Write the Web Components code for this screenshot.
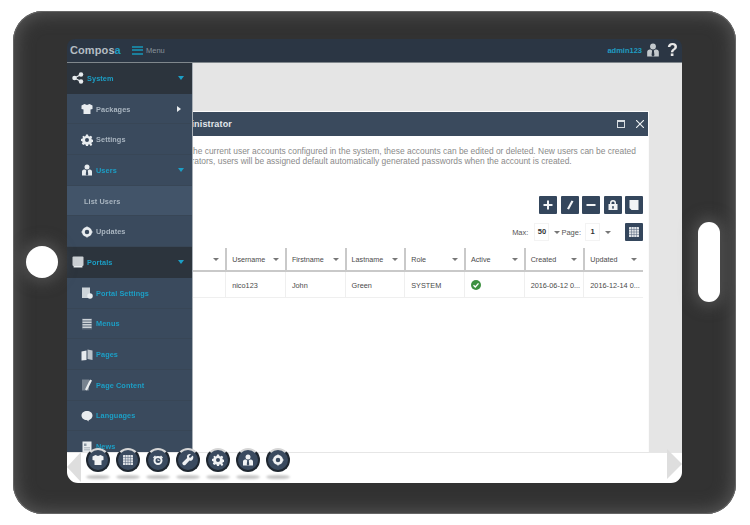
<!DOCTYPE html>
<html>
<head>
<meta charset="utf-8">
<title>Composa</title>
<style>
html, body { margin: 0; padding: 0; background: #fff; }
body { width: 750px; height: 525px; overflow: hidden; font-family: "Liberation Sans", Arial, sans-serif; }
</style>
</head>
<body>
<tablet-frame>
  <top-bar></top-bar>
  <side-menu slot="side">
    <menu-row level="top" icon="network" arrow="down" active>System</menu-row>
    <menu-row icon="shirt" arrow="right">Packages</menu-row>
    <menu-row icon="gear">Settings</menu-row>
    <menu-row icon="user" arrow="down" active>Users</menu-row>
    <menu-row level="leaf">List Users</menu-row>
    <menu-row icon="ring">Updates</menu-row>
    <menu-row level="top" icon="monitor" arrow="down" active>Portals</menu-row>
    <menu-row icon="docgear" active>Portal Settings</menu-row>
    <menu-row icon="list" active>Menus</menu-row>
    <menu-row icon="pages" active>Pages</menu-row>
    <menu-row icon="pencil" active>Page Content</menu-row>
    <menu-row icon="bubble" active>Languages</menu-row>
    <menu-row icon="news" active>News</menu-row>
  </side-menu>
  <user-window slot="main"></user-window>
  <app-dock slot="dock"></app-dock>
</tablet-frame>

<script>
const ICONS = {
  network: '<circle cx="18" cy="5" r="4.5"/><circle cx="5" cy="12" r="4.5"/><circle cx="18" cy="19" r="4.5"/><path d="M5 12L18 5M5 12l13 7" stroke="currentColor" stroke-width="2.4"/>',
  shirt: '<path d="M7 2l5 2 5-2 6 3v7l-4 1v9H5v-9l-4-1V5z"/>',
  gear: '<path d="M10 1h4l.8 3.2 2 .8L19.700 3.300l2.800 2.900-1.700 2.800.8 2 3.200.8v4l-3.200.8-.8 2 1.700 2.800-2.800 2.900L16.800 20.400l-2 .8L14 24h-4l-.8-2.800-2-.8-2.900 1.700-2.800-2.900 1.700-2.800-.8-2L0 14v-4l3.200-.8.800-2L2.300 6.200l2.800-2.900L7.200 5l2-.8zM12 8a4 4 0 1 0 0 8 4 4 0 0 0 0-8z" fill-rule="evenodd"/>',
  user: '<circle cx="12" cy="6" r="5"/><path d="M2 23v-8c0-3 3-4 6-4l2.500 2-1 8 2.500 2 2.500-2-1-8 2.500-2c3 0 6 1 6 4v8z"/>',
  ring: '<path d="M12 2a10 10 0 1 0 0 20 10 10 0 0 0 0-20zm0 5.500a4.500 4.500 0 1 1 0 9 4.500 4.500 0 0 1 0-9z" fill-rule="evenodd"/><path d="M12 0l2 3h-4zM12 24l-2-3h4zM0 12l3-2v4zM24 12l-3 2v-4z"/>',
  monitor: '<rect x="1" y="1" width="22" height="19" rx="2" fill-opacity=".85"/><rect x="3" y="20" width="18" height="3" rx="1"/>',
  docgear: '<rect x="2" y="1" width="16" height="21" fill-opacity=".85"/><circle cx="18" cy="18" r="5.500"/>',
  list: '<rect x="2" y="1" width="20" height="22" fill-opacity=".2"/><path d="M3 2h18v3H3zM3 7h18v3H3zM3 12h18v3H3zM3 17h18v3H3z" fill-opacity=".8"/>',
  pages: '<path d="M1 5l10-2v19l-10 1z"/><path d="M13 1l10 2v19l-10-2z" fill-opacity=".75"/>',
  pencil: '<rect x="2" y="1" width="14" height="22" fill-opacity=".35"/><path d="M18 1l4 2-10 20-4-2z"/>',
  bubble: '<path d="M12 2c6 0 11 3.500 11 9s-5 9-8 9l1 3-5-3C6 20 1 16.500 1 11S6 2 12 2z"/>',
  news: '<rect x="3" y="1" width="18" height="23"/><path d="M6 5h5v5H6zM6 13h12v1.500H6zM6 17h12v1.500H6z" fill="#8b97a3"/>',
  grid: '<rect x="2" y="2" width="20" height="20" rx="1" fill-opacity=".9"/><path d="M2 7h20M2 12h20M2 17h20M7 2v20M12 2v20M17 2v20" stroke="#52627a" stroke-width="1"/>',
  clock: '<path d="M12 4a9 9 0 1 0 0 18 9 9 0 0 0 0-18zm0 4a5 5 0 1 1 0 10 5 5 0 0 1 0-10z" fill-rule="evenodd"/><path d="M11.200 9.500h1.600v3.200h2.500v1.500h-4.100zM2 7l4-4 2 2-4 4zM22 7l-4-4-2 2 4 4z"/>',
  wrench: '<path d="M21 3.500l-4 4-2.500-.7-.7-2.500 4-4c-3-1-6.500.3-7.600 3.300-.5 1.500-.4 3 .1 4.300L1.500 16.600c-1.200 1.200-1.200 3 0 4.200l1 1c1.200 1.200 3 1.200 4.200 0l8.300-8.700c1.300.5 2.800.5 4.200 0 3-1.200 4.300-6.500 2.800-9.600z"/>',
  plus: '<path d="M10 3h4v7h7v4h-7v7h-4v-7H3v-4h7z"/>',
  slash: '<path d="M15 3l4 1.500L10 21l-4-1.500z"/>',
  minus: '<path d="M3 10h18v4H3z"/>',
  lock: '<path d="M12 2a6 6 0 0 0-6 6v2H3v12h18V10h-3V8a6 6 0 0 0-6-6zm0 3a3 3 0 0 1 3 3v2H9V8a3 3 0 0 1 3-3zm0 9a2 2 0 0 1 1 3.700V20h-2v-2.300A2 2 0 0 1 12 14z" fill-rule="evenodd"/>',
  page: '<path d="M3 2h18v20H7l-4-4z"/>'
};

function svgIcon(name, size) {
  return `<svg width="${size}" height="${size}" viewBox="0 0 24 24" fill="currentColor" aria-hidden="true">${ICONS[name]}</svg>`;
}

class TabletFrame extends HTMLElement {
  constructor() {
    super();
    this.attachShadow({mode: "open"}).innerHTML = `
    <style>
      :host {
        display: block;
        position: relative;
        box-sizing: border-box;
        width: 723px;
        height: 503px;
        margin: 11px 0 0 13px;
        padding: 28px 54px 31px;
        border-radius: 30px;
        background: #323232;
        box-shadow: inset 0 0 18px 2px #595959, inset 0 0 0 1px #777;
        overflow: hidden;
      }
      .screen {
        display: grid;
        grid-template-rows: 24px 389px 31px;
        height: 444px;
        border-radius: 8px 8px 11px 11px;
        overflow: hidden;
        filter: blur(.35px);
      }
      .main { display: flex; min-height: 0; overflow: hidden; background: #e5e5e5; }
      .hole {
        position: absolute;
        background: #fff;
        box-shadow: 0 0 14px 5px rgba(105,105,105,.5);
      }
      .home { left: 13px; top: 235px; width: 32px; height: 32px; border-radius: 50%; }
      .power { right: 16px; top: 211px; width: 22px; height: 80px; border-radius: 11px; }
      ::slotted([slot="dock"]) { position: relative; z-index: 3; }
    </style>
    <div class="screen">
      <slot></slot>
      <div class="main">
        <slot name="side"></slot>
        <slot name="main"></slot>
      </div>
      <slot name="dock"></slot>
    </div>
    <div class="hole home"></div>
    <div class="hole power"></div>`;
  }
}

class TopBar extends HTMLElement {
  constructor() {
    super();
    this.attachShadow({mode: "open"}).innerHTML = `
    <style>
      :host {
        display: flex;
        align-items: center;
        box-sizing: border-box;
        height: 24px;
        padding: 0 4px 1px 3px;
        background: #2b3644;
        border-bottom: 1px solid #80878c;
        font-family: "Liberation Sans", Arial, sans-serif;
      }
      .logo { font-size: 11px; font-weight: bold; color: #b4bdc3; width: 62px; letter-spacing: .1px; }
      .logo b { color: #1f9cc2; }
      .burger { width: 11px; height: 9px; margin-right: 3px; border-top: 2px solid #1b7f9c; border-bottom: 2px solid #1b7f9c; box-sizing: border-box; }
      .burger i { display: block; height: 2px; margin-top: 1.500px; background: #1b7f9c; }
      .menu { font-size: 7.500px; color: #87919a; }
      .space { flex: 1; }
      .admin { font-size: 7.500px; font-weight: bold; color: #1f9cc2; margin-right: 4px; }
      .who { color: #c3c9cd; display: flex; margin-right: 7px; }
      .help { font-size: 18px; line-height: 20px; font-weight: bold; color: #e8e8e8; }
    </style>
    <span class="logo">Compos<b>a</b></span>
    <span class="burger"><i></i></span>
    <span class="menu">Menu</span>
    <span class="space"></span>
    <span class="admin">admin123</span>
    <span class="who">${svgIcon("user", 14)}</span>
    <span class="help">?</span>`;
  }
}

class SideMenu extends HTMLElement {
  constructor() {
    super();
    this.attachShadow({mode: "open"}).innerHTML = `
    <style>
      :host {
        display: block;
        position: relative;
        z-index: 2;
        flex: 0 0 125px;
        width: 125px;
        background: #3a4a5d;
        box-shadow: 1px 0 0 #a9b0b7;
        overflow: hidden;
      }
    </style>
    <slot></slot>`;
  }
}

class MenuRow extends HTMLElement {
  constructor() {
    super();
    const level = this.getAttribute("level") || "sub";
    const icon = this.getAttribute("icon");
    const arrow = this.getAttribute("arrow");
    this.attachShadow({mode: "open"}).innerHTML = `
    <style>
      :host {
        display: flex;
        align-items: center;
        box-sizing: border-box;
        height: 30.700px;
        padding: 1px 0 0 14px;
        background: #3a4a5d;
        border-bottom: 1px solid #384656;
        color: #a9b5c0;
        font: bold 7.300px "Liberation Sans", Arial, sans-serif;
        letter-spacing: .1px;
      }
      :host([active]) { color: #1c9fc6; }
      :host([level="top"]) { background: #2c343d; padding-left: 5px; border-bottom-color: #2c343d; }
      :host([level="leaf"]) { background: #425469; padding-left: 17px; }
      .ic { display: flex; width: 15px; color: #e8ecef; }
      .ar { margin-left: auto; margin-right: 8px; width: 0; height: 0; }
      .down { border-left: 3.500px solid transparent; border-right: 3.500px solid transparent; border-top: 4px solid #1c9fc6; }
      .right { border-top: 3.500px solid transparent; border-bottom: 3.500px solid transparent; border-left: 4px solid #e8ecef; margin-right: 11px; }
    </style>
    ${icon ? `<span class="ic">${svgIcon(icon, 12)}</span>` : ""}
    <span><slot></slot></span>
    ${arrow ? `<span class="ar ${arrow}"></span>` : ""}`;
  }
}

class ToolButton extends HTMLElement {
  constructor() {
    super();
    this.attachShadow({mode: "open"}).innerHTML = `
    <style>
      :host {
        display: flex;
        align-items: center;
        justify-content: center;
        width: 18px;
        height: 18px;
        border-radius: 1px;
        background: #34465c;
        color: #f2f4f6;
      }
    </style>
    ${svgIcon(this.getAttribute("icon"), 12)}`;
  }
}

class PickBox extends HTMLElement {
  constructor() {
    super();
    this.attachShadow({mode: "open"}).innerHTML = `
    <style>
      :host { display: inline-flex; align-items: center; }
      .v {
        box-sizing: border-box;
        width: 15px;
        height: 18px;
        line-height: 16px;
        text-align: center;
        font-weight: bold;
        color: #333;
        border: 1px solid #f3f3f3;
      }
      .c { margin-left: 5px; width: 0; height: 0; border-left: 3px solid transparent; border-right: 3px solid transparent; border-top: 3px solid #777; }
    </style>
    <span class="v"><slot></slot></span><span class="c"></span>`;
  }
}

class HeadCell extends HTMLElement {
  constructor() {
    super();
    this.attachShadow({mode: "open"}).innerHTML = `
    <style>
      :host {
        display: flex;
        align-items: center;
        justify-content: space-between;
        box-sizing: border-box;
        padding: 1px 6px 0 5px;
        border-left: 2px solid #c9c9c9;
        color: #4a4a4a;
        font-size: 7.200px;
      }
      :host(:first-child) { border-left: 0; }
      .c { width: 0; height: 0; border-left: 3px solid transparent; border-right: 3px solid transparent; border-top: 3px solid #777; }
    </style>
    <span><slot></slot></span><span class="c"></span>`;
  }
}

class UserWindow extends HTMLElement {
  constructor() {
    super();
    this.attachShadow({mode: "open"}).innerHTML = `
    <style>
      :host {
        display: flex;
        flex-direction: column;
        flex: 1;
        min-width: 0;
        margin: 48px 33px 0 -70px;
        border: 1px solid #fbfbfb;
        border-bottom: 0;
        background: #fff;
        font: 7.300px "Liberation Sans", Arial, sans-serif;
        color: #4a4a4a;
      }
      .title {
        display: flex;
        align-items: center;
        flex: 0 0 24px;
        padding: 0 4px 0 48px;
        background: #3a4a5d;
        color: #e3e8ec;
        font-size: 9px;
        font-weight: bold;
      }
      .title .tx { flex: 1; letter-spacing: .15px; }
      .max { width: 8px; height: 8px; box-sizing: border-box; border: 1px solid #d8dde1; border-top-width: 2px; margin-right: 11px; }
      .close { width: 8px; height: 8px; color: #eef1f3; display: flex; }
      .body { padding: 10px 5px 0 0; flex: 1; }
      .desc { margin: 0 0 30px; font-size: 8.440px; line-height: 10px; color: #8a8a8a; white-space: nowrap; padding-left: 4px; }
      .desc span { margin-left: 21px; }
      .tools { display: flex; justify-content: flex-end; gap: 3.500px; }
      .paging { display: flex; align-items: center; justify-content: flex-end; margin-top: 8px; height: 20px; font-size: 7.500px; }
      .paging .l { color: #555; }
      .gap { margin-right: 6px; }
      .paging pick-box { margin-right: 1px; }
      .paging pick-box.one { margin-right: 14px; margin-left: 4px; }
      .grid { display: grid; grid-template-columns: 1fr repeat(7, 59.700px); margin-top: 6px; }
      head-cell { height: 24px; border-bottom: 2px solid #c9c9c9; }
      .cell { height: 26px; line-height: 27px; box-sizing: border-box; padding-left: 6px; border-left: 1px solid #efefef; border-bottom: 1px solid #efefef; color: #4a4a4a; white-space: nowrap; overflow: hidden; }
      .ok { display: flex; align-items: center; height: 26px; }
    </style>
    <div class="title">
      <span class="tx">Administrator</span>
      <span class="max"></span>
      <span class="close"><svg viewBox="0 0 10 10" width="8" height="8" stroke="currentColor" stroke-width="1.400"><path d="M0 0l10 10M10 0L0 10"/></svg></span>
    </div>
    <div class="body">
      <p class="desc">Listed below are the current user accounts configured in the system, these accounts can be edited or deleted. New users can be created<br><span>for administrators, users will be assigned default automatically generated passwords when the account is created.</span></p>
      <div class="tools">
        <tool-button icon="plus"></tool-button>
        <tool-button icon="slash"></tool-button>
        <tool-button icon="minus"></tool-button>
        <tool-button icon="lock"></tool-button>
        <tool-button icon="page"></tool-button>
      </div>
      <div class="paging">
        <span class="l gap">Max:</span><pick-box>50</pick-box>
        <span class="l">Page:</span><pick-box class="one">1</pick-box>
        <tool-button icon="grid"></tool-button>
      </div>
      <div class="grid">
        <head-cell></head-cell><head-cell>Username</head-cell><head-cell>Firstname</head-cell><head-cell>Lastname</head-cell><head-cell>Role</head-cell><head-cell>Active</head-cell><head-cell>Created</head-cell><head-cell>Updated</head-cell>
        <div class="cell" style="border-left:0"></div><div class="cell">nico123</div><div class="cell">John</div><div class="cell">Green</div><div class="cell">SYSTEM</div>
        <div class="cell"><span class="ok"><svg width="10" height="10" viewBox="0 0 22 22"><circle cx="11" cy="11" r="11" fill="#3d9140"/><path d="M5.500 11.500l4 4 7-8" fill="none" stroke="#fff" stroke-width="3"/></svg></span></div>
        <div class="cell">2016-06-12 0...</div><div class="cell">2016-12-14 0...</div>
      </div>
    </div>`;
  }
}

class DockButton extends HTMLElement {
  constructor() {
    super();
    this.attachShadow({mode: "open"}).innerHTML = `
    <style>
      :host { display: flex; flex-direction: column; align-items: center; width: 24px; margin-right: 6px; }
      .ball {
        display: flex;
        align-items: center;
        justify-content: center;
        box-sizing: border-box;
        width: 24px;
        height: 24px;
        border-radius: 50%;
        background: #3a4a5f;
        border: 2px solid #1f2730;
        border-top-color: #d6d6d6;
        color: #f0f2f4;
      }
      .shade { width: 24px; height: 4px; margin-top: 2.500px; border-radius: 50%; background: #c4c4c4; filter: blur(1px); }
    </style>
    <span class="ball">${svgIcon(this.getAttribute("icon"), 12)}</span>
    <span class="shade"></span>`;
  }
}

class AppDock extends HTMLElement {
  constructor() {
    super();
    this.attachShadow({mode: "open"}).innerHTML = `
    <style>
      :host { display: flex; height: 31px; background: #fff; box-shadow: inset 0 1px #e6e6e6; }
      .tri { width: 0; height: 0; border-top: 15.500px solid transparent; border-bottom: 15.500px solid transparent; }
      .l { border-right: 14px solid #dedede; margin-right: 5px; }
      .r { border-left: 15px solid #dedede; margin-left: auto; margin-top: -3px; }
      .items { display: flex; margin-top: -4px; height: 35px; }
    </style>
    <span class="tri l"></span>
    <div class="items">
      <dock-button icon="shirt"></dock-button>
      <dock-button icon="grid"></dock-button>
      <dock-button icon="clock"></dock-button>
      <dock-button icon="wrench"></dock-button>
      <dock-button icon="gear"></dock-button>
      <dock-button icon="user"></dock-button>
      <dock-button icon="ring"></dock-button>
    </div>
    <span class="tri r"></span>`;
  }
}

customElements.define("tablet-frame", TabletFrame);
customElements.define("top-bar", TopBar);
customElements.define("side-menu", SideMenu);
customElements.define("menu-row", MenuRow);
customElements.define("tool-button", ToolButton);
customElements.define("pick-box", PickBox);
customElements.define("head-cell", HeadCell);
customElements.define("user-window", UserWindow);
customElements.define("dock-button", DockButton);
customElements.define("app-dock", AppDock);
</script>
</body>
</html>
